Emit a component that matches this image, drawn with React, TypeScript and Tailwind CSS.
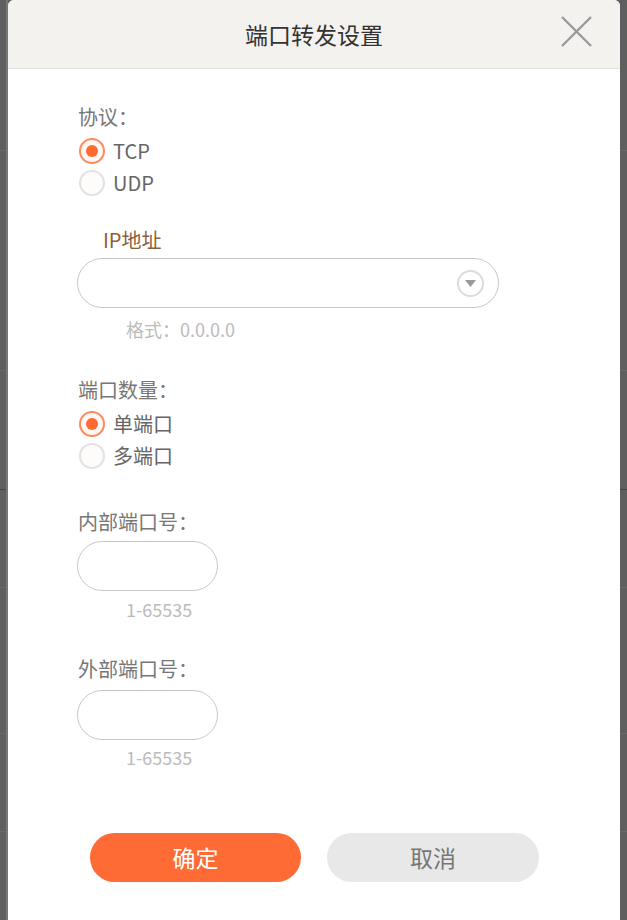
import React from 'react';

const font = { fontFamily: '"Noto Sans CJK SC", "Noto Sans", sans-serif' };

const Radio = ({ checked, label }: { checked?: boolean; label: string }) => (
  <div className="flex h-8 items-center gap-[8px]">
    {checked ? (
      <span className="ml-[1px] flex h-[26px] w-[26px] items-center justify-center rounded-full border-2 border-[#ff8a5c] bg-[#fff7f3]">
        <span className="h-[12px] w-[12px] rounded-full bg-[#ff6a33]" />
      </span>
    ) : (
      <span className="ml-[1px] h-[26px] w-[26px] rounded-full border-2 border-[#e2e2e2] bg-[#fdfcfa]" />
    )}
    <span className="text-[20px] leading-8 text-[#666]">{label}</span>
  </div>
);

const Label = ({ children, className = '' }: { children: React.ReactNode; className?: string }) => (
  <div className={`h-6 text-[20px] leading-6 text-[#777] ${className}`}>{children}</div>
);

const Hint = ({ children, className = '' }: { children: React.ReactNode; className?: string }) => (
  <div className={`ml-[48px] h-6 text-[18px] leading-6 text-[#bbb] ${className}`}>{children}</div>
);

export default function App() {
  return (
    <div className="relative h-[920px] w-[627px] overflow-hidden bg-[#5f5f5f]" style={font}>
      {/* page behind the overlay */}
      <div className="flex flex-col">
        <div className="h-[151px] border-b border-[#6a6a6a]" />
        <div className="h-[220px] border-b border-[#6a6a6a]" />
        <div className="h-[119px] border-b border-[#4a4236]" />
        <div className="h-[98px] border-b border-[#6a6a6a]" />
        <div className="h-[146px] border-b border-[#6a6a6a]" />
        <div className="h-[98px] border-b border-[#6a6a6a]" />
      </div>
      <div className="absolute left-[6px] top-0 h-full w-[2px] bg-[#777]" />

      {/* dialog */}
      <div className="absolute left-[8px] top-0 h-[940px] w-[612px] overflow-hidden rounded-t-[6px] bg-white">
        <div className="relative flex h-[69px] items-center justify-center border-b border-[#e2e1de] bg-[#f3f2ef]">
          <span className="text-[23px] text-[#333]">端口转发设置</span>
          <svg className="absolute right-[27px] top-[15px]" width="33" height="33" viewBox="0 0 33 33">
            <path d="M2 2 L31 31 M31 2 L2 31" stroke="#9a9a9a" strokeWidth="2.4" fill="none" />
          </svg>
        </div>

        <div className="flex flex-col pl-[70px] pt-[36px]">
          <Label>协议：</Label>
          <div className="mt-[6px]">
            <Radio checked label="TCP" />
            <Radio label="UDP" />
          </div>

          <Label className="ml-[25px] mt-[29px] !text-[#8b5e3c]">IP地址</Label>
          <div className="-ml-px mt-[6px] flex h-[50px] w-[422px] items-center justify-end rounded-full border border-[#c8c8c8] pr-[14px]">
            <span className="flex h-[27px] w-[27px] items-center justify-center rounded-full border-2 border-[#dadada]">
              <svg width="11" height="7" viewBox="0 0 11 7">
                <path d="M0 0 H11 L5.5 7 Z" fill="#999" />
              </svg>
            </span>
          </div>
          <Hint className="mt-[9px]">格式：0.0.0.0</Hint>

          <Label className="mt-[37px]">端口数量：</Label>
          <div className="mt-[6px]">
            <Radio checked label="单端口" />
            <Radio label="多端口" />
          </div>

          <Label className="mt-[38px]">内部端口号：</Label>
          <div className="-ml-px mt-[7px] h-[50px] w-[141px] rounded-full border border-[#c8c8c8]" />
          <Hint className="mt-[6px]">1-65535</Hint>

          <Label className="mt-[36px]">外部端口号：</Label>
          <div className="-ml-px mt-[9px] h-[50px] w-[141px] rounded-full border border-[#c8c8c8]" />
          <Hint className="mt-[5px]">1-65535</Hint>
        </div>

        <div className="mt-[64px] flex gap-[26px] pl-[82px]">
          <button className="flex h-[49px] w-[211px] items-center justify-center rounded-full bg-[#ff6b35] text-[23px] text-white">
            确定
          </button>
          <button className="flex h-[49px] w-[212px] items-center justify-center rounded-full bg-[#e8e8e8] text-[23px] text-[#777]">
            取消
          </button>
        </div>
      </div>
    </div>
  );
}
